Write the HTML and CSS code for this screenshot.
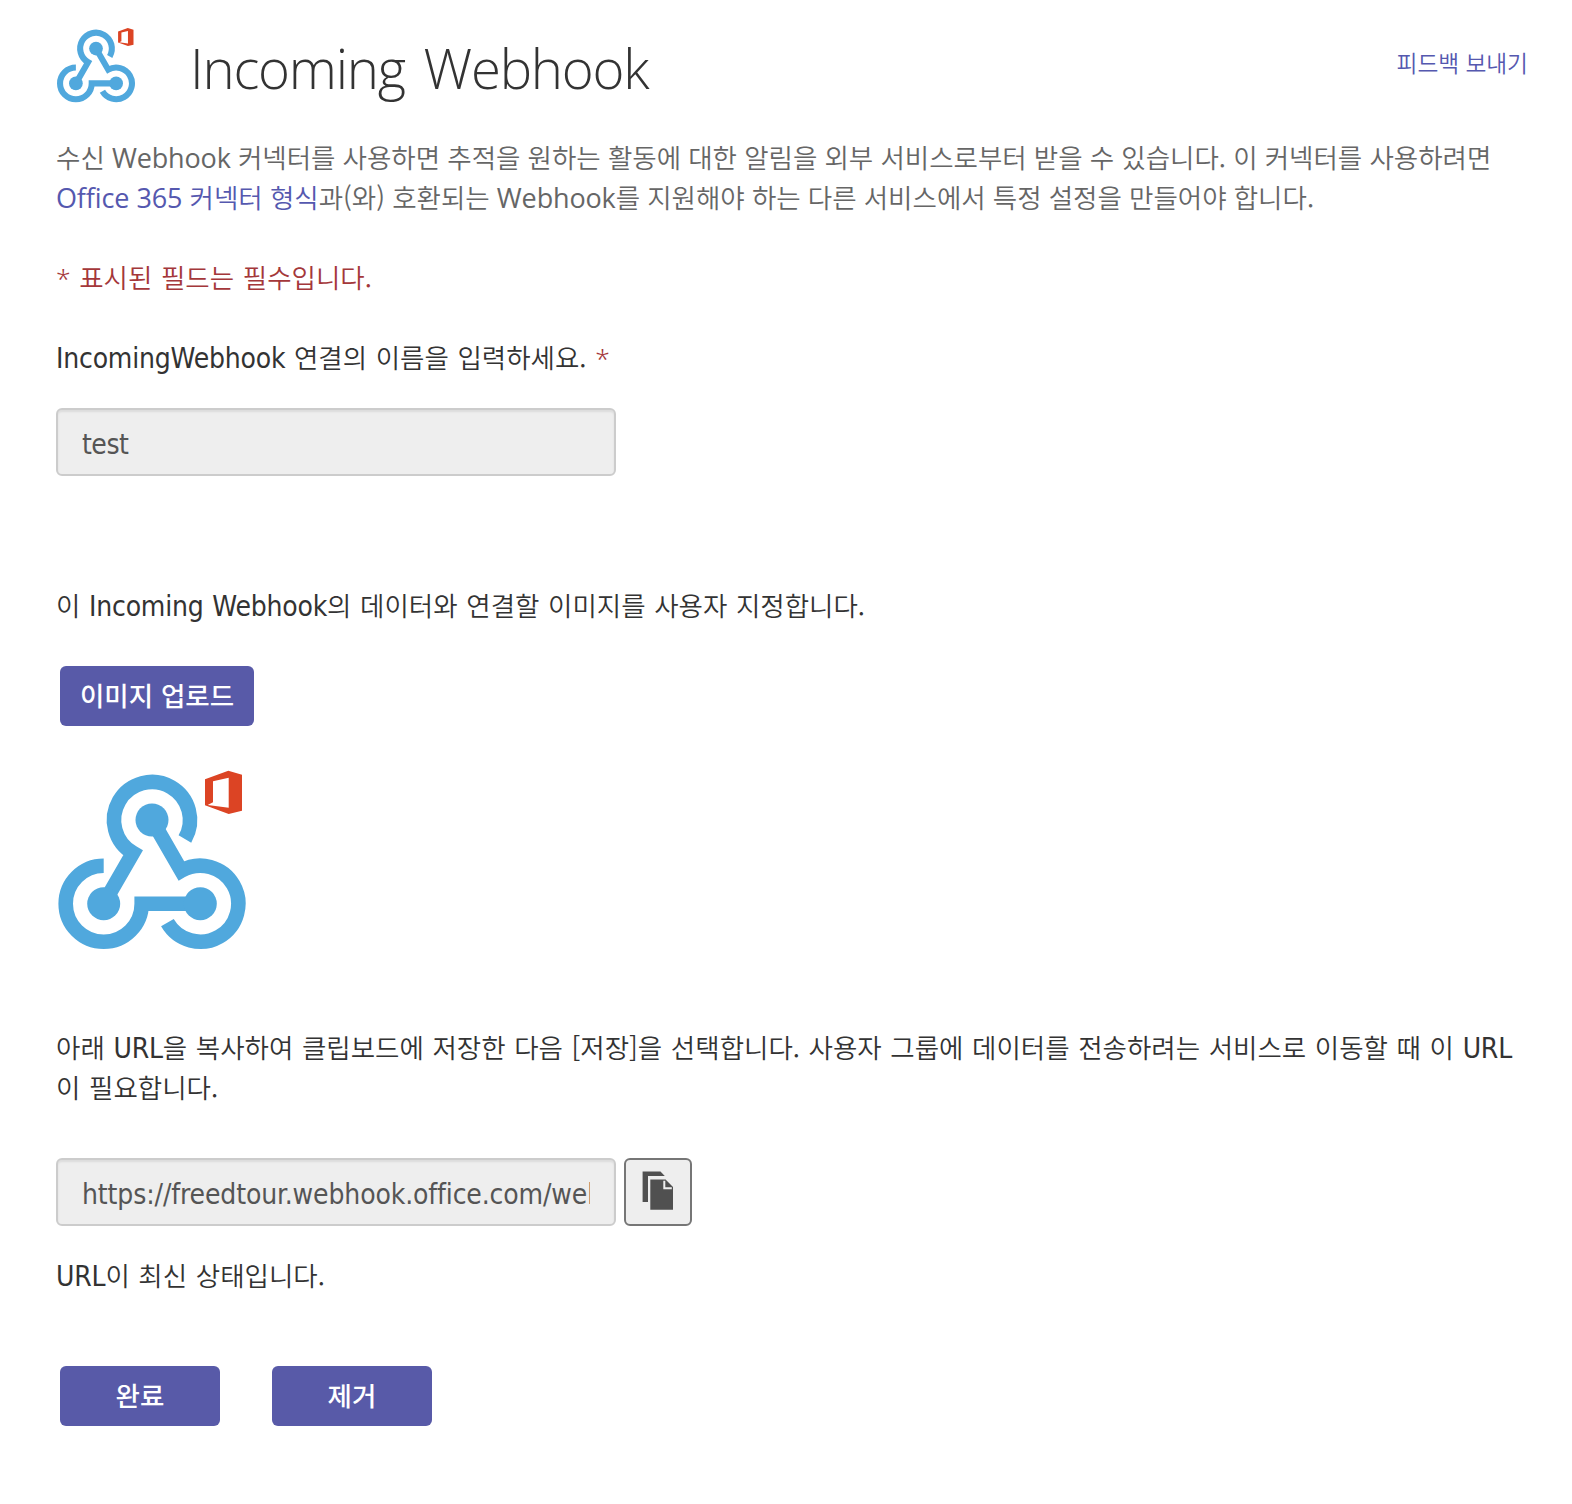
FILE: index.html
```html
<!DOCTYPE html>
<html lang="ko">
<head>
<meta charset="utf-8">
<title>Incoming Webhook</title>
<link rel="stylesheet" href="styles.css">
</head>
<body>
<svg class="defs" aria-hidden="true">
  <symbol id="webhook-logo" viewBox="0 0 192 192">
    <g fill="none" stroke="#50a8dd" stroke-width="14.6">
      <path d="M128.9 73A38 38 0 1 0 77 86.9L47.7 137.7"/>
      <path d="M47.7 99.7A38 38 0 1 0 85.7 137.7H144.3"/>
      <path d="M111.4 156.7A38 38 0 1 0 125.3 104.8L96 54"/>
    </g>
    <g fill="#50a8dd">
      <circle cx="96" cy="54" r="16.5"/>
      <circle cx="47.7" cy="137.7" r="16.5"/>
      <circle cx="144.3" cy="137.7" r="16.5"/>
    </g>
    <path fill="#dc4424" fill-rule="evenodd" d="M149 13.3L172.3 4.7L186 8.7V44.7L172.7 48L149 39.3ZM157 15.3V36.3L151.7 38.9L172.7 41.7V11.7Z"/>
  </symbol>
</svg>
<main class="page">
  <header class="header">
    <svg class="header-logo"><use href="#webhook-logo"/></svg>
    <h1 class="title">Incoming Webhook</h1>
    <a class="feedback">피드백 보내기</a>
  </header>
  <p class="description">수신 <span class="lt">Webhook</span> 커넥터를 사용하면 추적을 원하는 활동에 대한 알림을 외부 서비스로부터 받을 수 있습니다. 이 커넥터를 사용하려면<br><a class="link"><span class="lt">Office 365</span> 커넥터 형식</a>과(와) 호환되는 <span class="lt">Webhook</span>를 지원해야 하는 다른 서비스에서 특정 설정을 만들어야 합니다.</p>
  <p class="text required"><span class="star">*</span> 표시된 필드는 필수입니다.</p>
  <label class="text name-label" for="name"><span class="th">IncomingWebhook</span> 연결의 이름을 입력하세요. <span class="star">*</span></label>
  <input class="field" id="name" value="test" readonly>
  <p class="text image-label">이 <span class="th">Incoming Webhook</span>의 데이터와 연결할 이미지를 사용자 지정합니다.</p>
  <button class="button upload">이미지 업로드</button>
  <svg class="preview"><use href="#webhook-logo"/></svg>
  <p class="text url-label">아래 <span class="th">URL</span>을 복사하여 클립보드에 저장한 다음 [저장]을 선택합니다. 사용자 그룹에 데이터를 전송하려는 서비스로 이동할 때 이 <span class="th">URL</span><br>이 필요합니다.</p>
  <div class="url-row">
    <input class="field url" value="https://freedtour.webhook.office.com/webhookb2/" readonly>
    <button class="copy" aria-label="복사">
      <svg class="copy-icon" viewBox="0 0 64 64" fill="#505050">
        <path d="M16.6 11.6H34.5L38.8 16H22V42H16.6Z"/>
        <path d="M24.3 19.5H39.6L47 27V49.8H24.3Z"/>
        <path d="M38.3 20.8V28.3H45.8" fill="none" stroke="#eee" stroke-width="2"/>
      </svg>
    </button>
  </div>
  <p class="text status"><span class="th">URL</span>이 최신 상태입니다.</p>
  <div class="actions">
    <button class="button">완료</button>
    <button class="button">제거</button>
  </div>
</main>
</body>
</html>
```
FILE: styles.css
```css
* { box-sizing: border-box; }
body { margin: 0; background: #fff; }
.defs { display: none; }
.page {
  display: flex;
  flex-direction: column;
  align-items: flex-start;
  padding: 26px 44px 0 56px;
  font-family: "Noto Sans CJK KR", "Noto Sans", sans-serif;
  font-size: 26.5px;
  font-weight: 350;
  line-height: 40px;
  color: #333;
}
p, h1 { margin: 0; }
.header { display: flex; width: 100%; height: 80px; }
.header-logo { width: 80px; height: 80px; }
.title {
  margin: 2px 0 0 54px;
  font-family: "Open Sans", "Noto Sans", sans-serif;
  font-size: 54.5px;
  font-weight: 300;
  line-height: 80px;
  letter-spacing: -1.25px;
  word-spacing: 6px;
  white-space: nowrap;
}
.feedback {
  margin-left: auto;
  margin-top: 17px;
  font-size: 22.7px;
  word-spacing: -0.2px;
  color: #5558af;
  white-space: nowrap;
}
.description { margin: 31px 0 1px; color: #666; white-space: nowrap; word-spacing: -0.25px; }
.link { color: #5558af; }
.lt { font-family: "Open Sans", "Noto Sans", sans-serif; font-size: 27px; font-weight: 400; line-height: 1; letter-spacing: -0.15px; word-spacing: 0.5px; }
.text { margin-bottom: 1px; white-space: nowrap; word-spacing: 1.2px; }
.th { font-family: "DejaVu Sans Condensed", "DejaVu Sans", sans-serif; font-size: 28px; font-weight: 400; line-height: 1; letter-spacing: -0.2px; word-spacing: 1px; }
.required { margin-top: 39px; color: #a4373a; }
.star { font-family: "Noto Sans", sans-serif; font-weight: 300; line-height: 1; color: #a4373a; }
.name-label { margin-top: 39px; }
.field {
  width: 560px;
  height: 68px;
  margin: 0;
  padding: 6px 24px 2px;
  border: 2px solid #ccc;
  border-radius: 6px;
  background: #eee;
  box-shadow: inset 0 2px 2px rgba(0, 0, 0, 0.075);
  font-family: "DejaVu Sans Condensed", "DejaVu Sans", sans-serif;
  font-size: 28px;
  letter-spacing: -0.5px;
  color: #555;
  outline: none;
}
.url { letter-spacing: -0.13px; }
.name-label + .field { margin-top: 30px; }
.image-label { margin-top: 109px; }
.button {
  width: 160px;
  height: 60px;
  padding: 0;
  border: 0;
  border-radius: 6px;
  background: #585aa8;
  color: #fff;
  font-family: "Noto Sans", "Noto Sans CJK KR", sans-serif;
  font-size: 26.5px;
  font-weight: 500;
  line-height: 56px;
}
.upload { width: 194px; margin: 40px 0 0 4px; word-spacing: 1px; }
.preview { width: 192px; height: 192px; margin-top: 40px; }
.url-label { margin-top: 69px; }
.url-row { display: flex; gap: 8px; margin-top: 50px; }
.copy {
  width: 68px;
  height: 68px;
  padding: 0;
  border: 2px solid #767676;
  border-radius: 6px;
  background: #eee;
}
.copy-icon { display: block; width: 64px; height: 64px; }
.status { margin-top: 29px; }
.actions { display: flex; gap: 52px; margin: 70px 0 0 4px; }
```
